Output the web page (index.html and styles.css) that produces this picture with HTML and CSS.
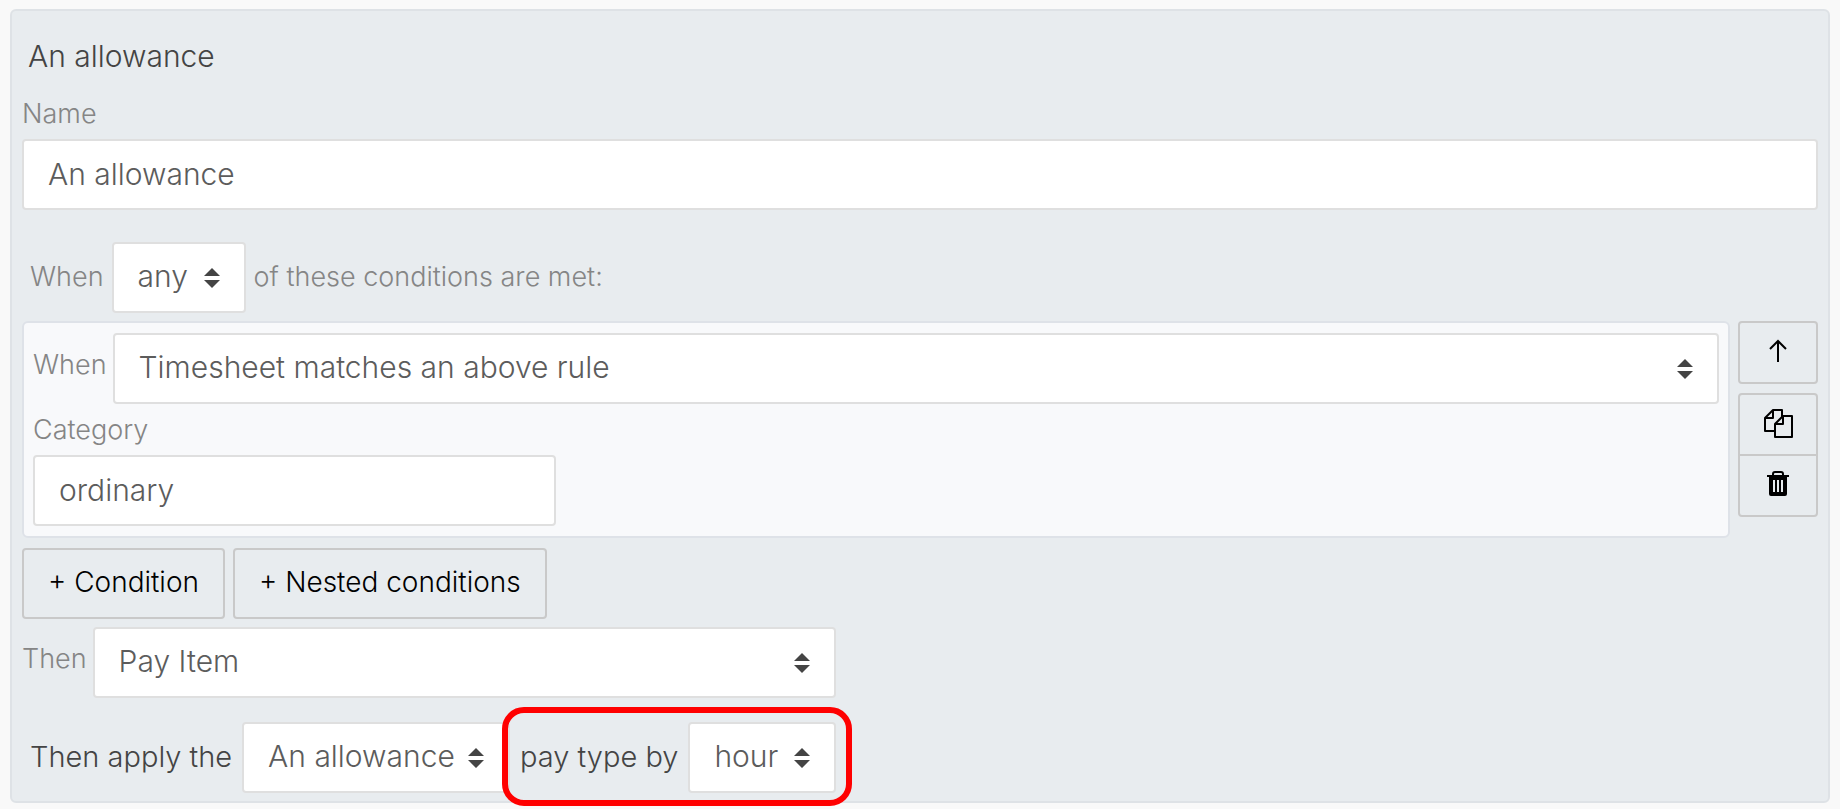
FILE: index.html
```html
<!DOCTYPE html>
<html lang="en">
<head>
  <meta charset="UTF-8">
  <meta name="viewport" content="width=device-width, initial-scale=1.0">
  <title>An allowance</title>
  <link rel="stylesheet" href="styles.css">
</head>
<body>

  <form class="rule">
    <h1 class="rule-title">An allowance</h1>

    <!-- Name -->
    <label class="label name-label" for="name">Name</label>
    <input class="control" type="text" id="name" value="An allowance">

    <!-- Conditions -->
    <div class="match-row">
      <label class="label" for="match">When</label>
      <select class="control select match-select" id="match">
        <option>any</option>
      </select>
      <span class="label">of these conditions are met:</span>
    </div>

    <div class="condition-row">
      <div class="condition">
        <div class="inline-field">
          <label class="label" for="conditionType">When</label>
          <select class="control select" id="conditionType">
            <option>Timesheet matches an above rule</option>
          </select>
        </div>
        <label class="label category-label" for="category">Category</label>
        <input class="control category-input" type="text" id="category" value="ordinary">
      </div>

      <div class="actions">
        <button type="button" class="button icon-button" aria-label="Move up">
          <svg width="18" height="24" viewBox="0 0 18 24" fill="none" stroke="#000" stroke-width="2">
            <path d="M9 23V2M1 10L9 2l8 8"/>
          </svg>
        </button>
        <div class="button-group">
          <button type="button" class="button icon-button" aria-label="Duplicate">
            <svg width="30" height="30" viewBox="0 0 30 30" fill="none" stroke="#000" stroke-width="2" stroke-linejoin="round">
              <path d="M12 23H2V10l8-8h9v7M10 2v8H2"/>
              <path d="M20 8h9v21H12V16zM20 8v8h-8"/>
            </svg>
          </button>
          <button type="button" class="button icon-button" aria-label="Delete">
            <svg width="24" height="26" viewBox="0 0 24 26">
              <path d="M7 5V3q0-2 2-2h6q2 0 2 2v2" fill="none" stroke="#000" stroke-width="2"/>
              <path fill="#000" fill-rule="evenodd" d="M1 4h22v2h-2v17q0 2-2 2H5q-2 0-2-2V6H1zM7 9v12h2V9zM11 9v12h2V9zM15 9v12h2V9z"/>
            </svg>
          </button>
        </div>
      </div>
    </div>

    <div class="add-row">
      <button type="button" class="button">+ Condition</button>
      <button type="button" class="button">+ Nested conditions</button>
    </div>

    <!-- Outcome -->
    <div class="outcome">
      <div class="inline-field">
        <label class="label" for="outcomeType">Then</label>
        <select class="control select" id="outcomeType">
          <option>Pay Item</option>
        </select>
      </div>
      <div class="apply-row">
        <label class="text" for="payItem">Then apply the</label>
        <select class="control select item-select" id="payItem">
          <option>An allowance</option>
        </select>
        <div class="highlight">
          <label class="text" for="unit">pay type by</label>
          <select class="control select unit-select" id="unit">
            <option>hour</option>
          </select>
        </div>
      </div>
    </div>
  </form>

</body>
</html>
```
FILE: styles.css
```css
* {
  margin: 0;
  padding: 0;
  box-sizing: border-box;
  font-family: Inter, "Liberation Sans", sans-serif;
  font-weight: 300;
}

body {
  padding: 9px 10px 6px;
  background-color: #f9f9f9;
}

.rule {
  padding: 28px 10px 8px;
  background-color: #e8ecef;
  border: 2px solid #dee2e6;
  border-radius: 6px;
}

.rule-title {
  padding-left: 6px;
  font-size: 30px;
  line-height: 35px;
  color: #444;
}

.label {
  font-size: 27px;
  line-height: 34px;
  color: #858585;
  white-space: nowrap;
}

.text {
  font-size: 29px;
  line-height: 35px;
  padding-bottom: 2px;
  color: #444;
  white-space: nowrap;
}

.name-label,
.category-label {
  display: block;
  margin-bottom: 8px;
}

.name-label {
  margin-top: 23px;
}

.category-label {
  margin-top: 9px;
}

/* Text boxes and drop-downs */
.control {
  display: block;
  width: 100%;
  min-width: 0;
  height: 71px;
  padding: 15px 24px 17px;
  font-size: 30px;
  line-height: 35px;
  color: #5c5c5c;
  background-color: #fff;
  border: 2px solid #dfdfdf;
  border-radius: 4px;
  outline: none;
}

.select {
  appearance: none;
  padding-right: 48px;
  background-image: url("data:image/svg+xml,%3Csvg xmlns='http://www.w3.org/2000/svg' width='16' height='20'%3E%3Cpath fill='%23444' d='M0 8l8-8 8 8zM0 12h16l-8 8z'/%3E%3C/svg%3E");
  background-repeat: no-repeat;
  background-position: right 24px center;
}

/* When ... of these conditions are met */
.match-row {
  display: flex;
  align-items: center;
  gap: 8px;
  margin-top: 32px;
  padding-left: 8px;
}

.match-row .label {
  padding-bottom: 2px;
}

.match-select {
  width: 134px;
}

.condition-row {
  display: flex;
  gap: 8px;
  margin-top: 8px;
}

.condition {
  flex: 1;
  padding: 10px 9px;
  background-color: #f8f9fb;
  border: 2px solid #dee2e8;
  border-radius: 6px;
}

.inline-field {
  display: flex;
  align-items: center;
  gap: 6px;
}

.inline-field .label {
  padding-bottom: 8px;
}

.inline-field .control {
  flex: 1;
}

.category-input {
  width: 31%;
}

/* Buttons */
.button {
  height: 71px;
  padding: 15px 24px 17px;
  font-size: 28px;
  line-height: 35px;
  color: #000;
  background-color: transparent;
  border: 2px solid #c9c9c9;
  border-radius: 4px;
  cursor: pointer;
}

.button:hover {
  background-color: #dee2e6;
}

.actions {
  display: flex;
  flex-direction: column;
  gap: 9px;
}

.icon-button {
  display: flex;
  justify-content: center;
  align-items: center;
  width: 80px;
  height: 63px;
  padding: 0 0 4px;
}

.button-group .icon-button:first-child {
  border-radius: 4px 4px 0 0;
}

.button-group .icon-button:last-child {
  margin-top: -2px;
  border-radius: 0 0 4px 4px;
}

.add-row {
  display: flex;
  gap: 8px;
  margin-top: 10px;
}

/* Then ... */
.outcome {
  width: fit-content;
  margin-top: 8px;
}

.apply-row {
  display: flex;
  align-items: center;
  gap: 10px;
  margin-top: 24px;
  padding-left: 8px;
}

.item-select {
  width: 268px;
}

.unit-select {
  width: 148px;
}

.highlight {
  position: relative;
  display: flex;
  align-items: center;
  gap: 10px;
}

/* Red frame drawn over the row */
.highlight::after {
  content: "";
  position: absolute;
  top: -15px;
  right: -16px;
  bottom: -13px;
  left: -18px;
  border: 6px solid #f00;
  border-radius: 22px;
  pointer-events: none;
}
```
